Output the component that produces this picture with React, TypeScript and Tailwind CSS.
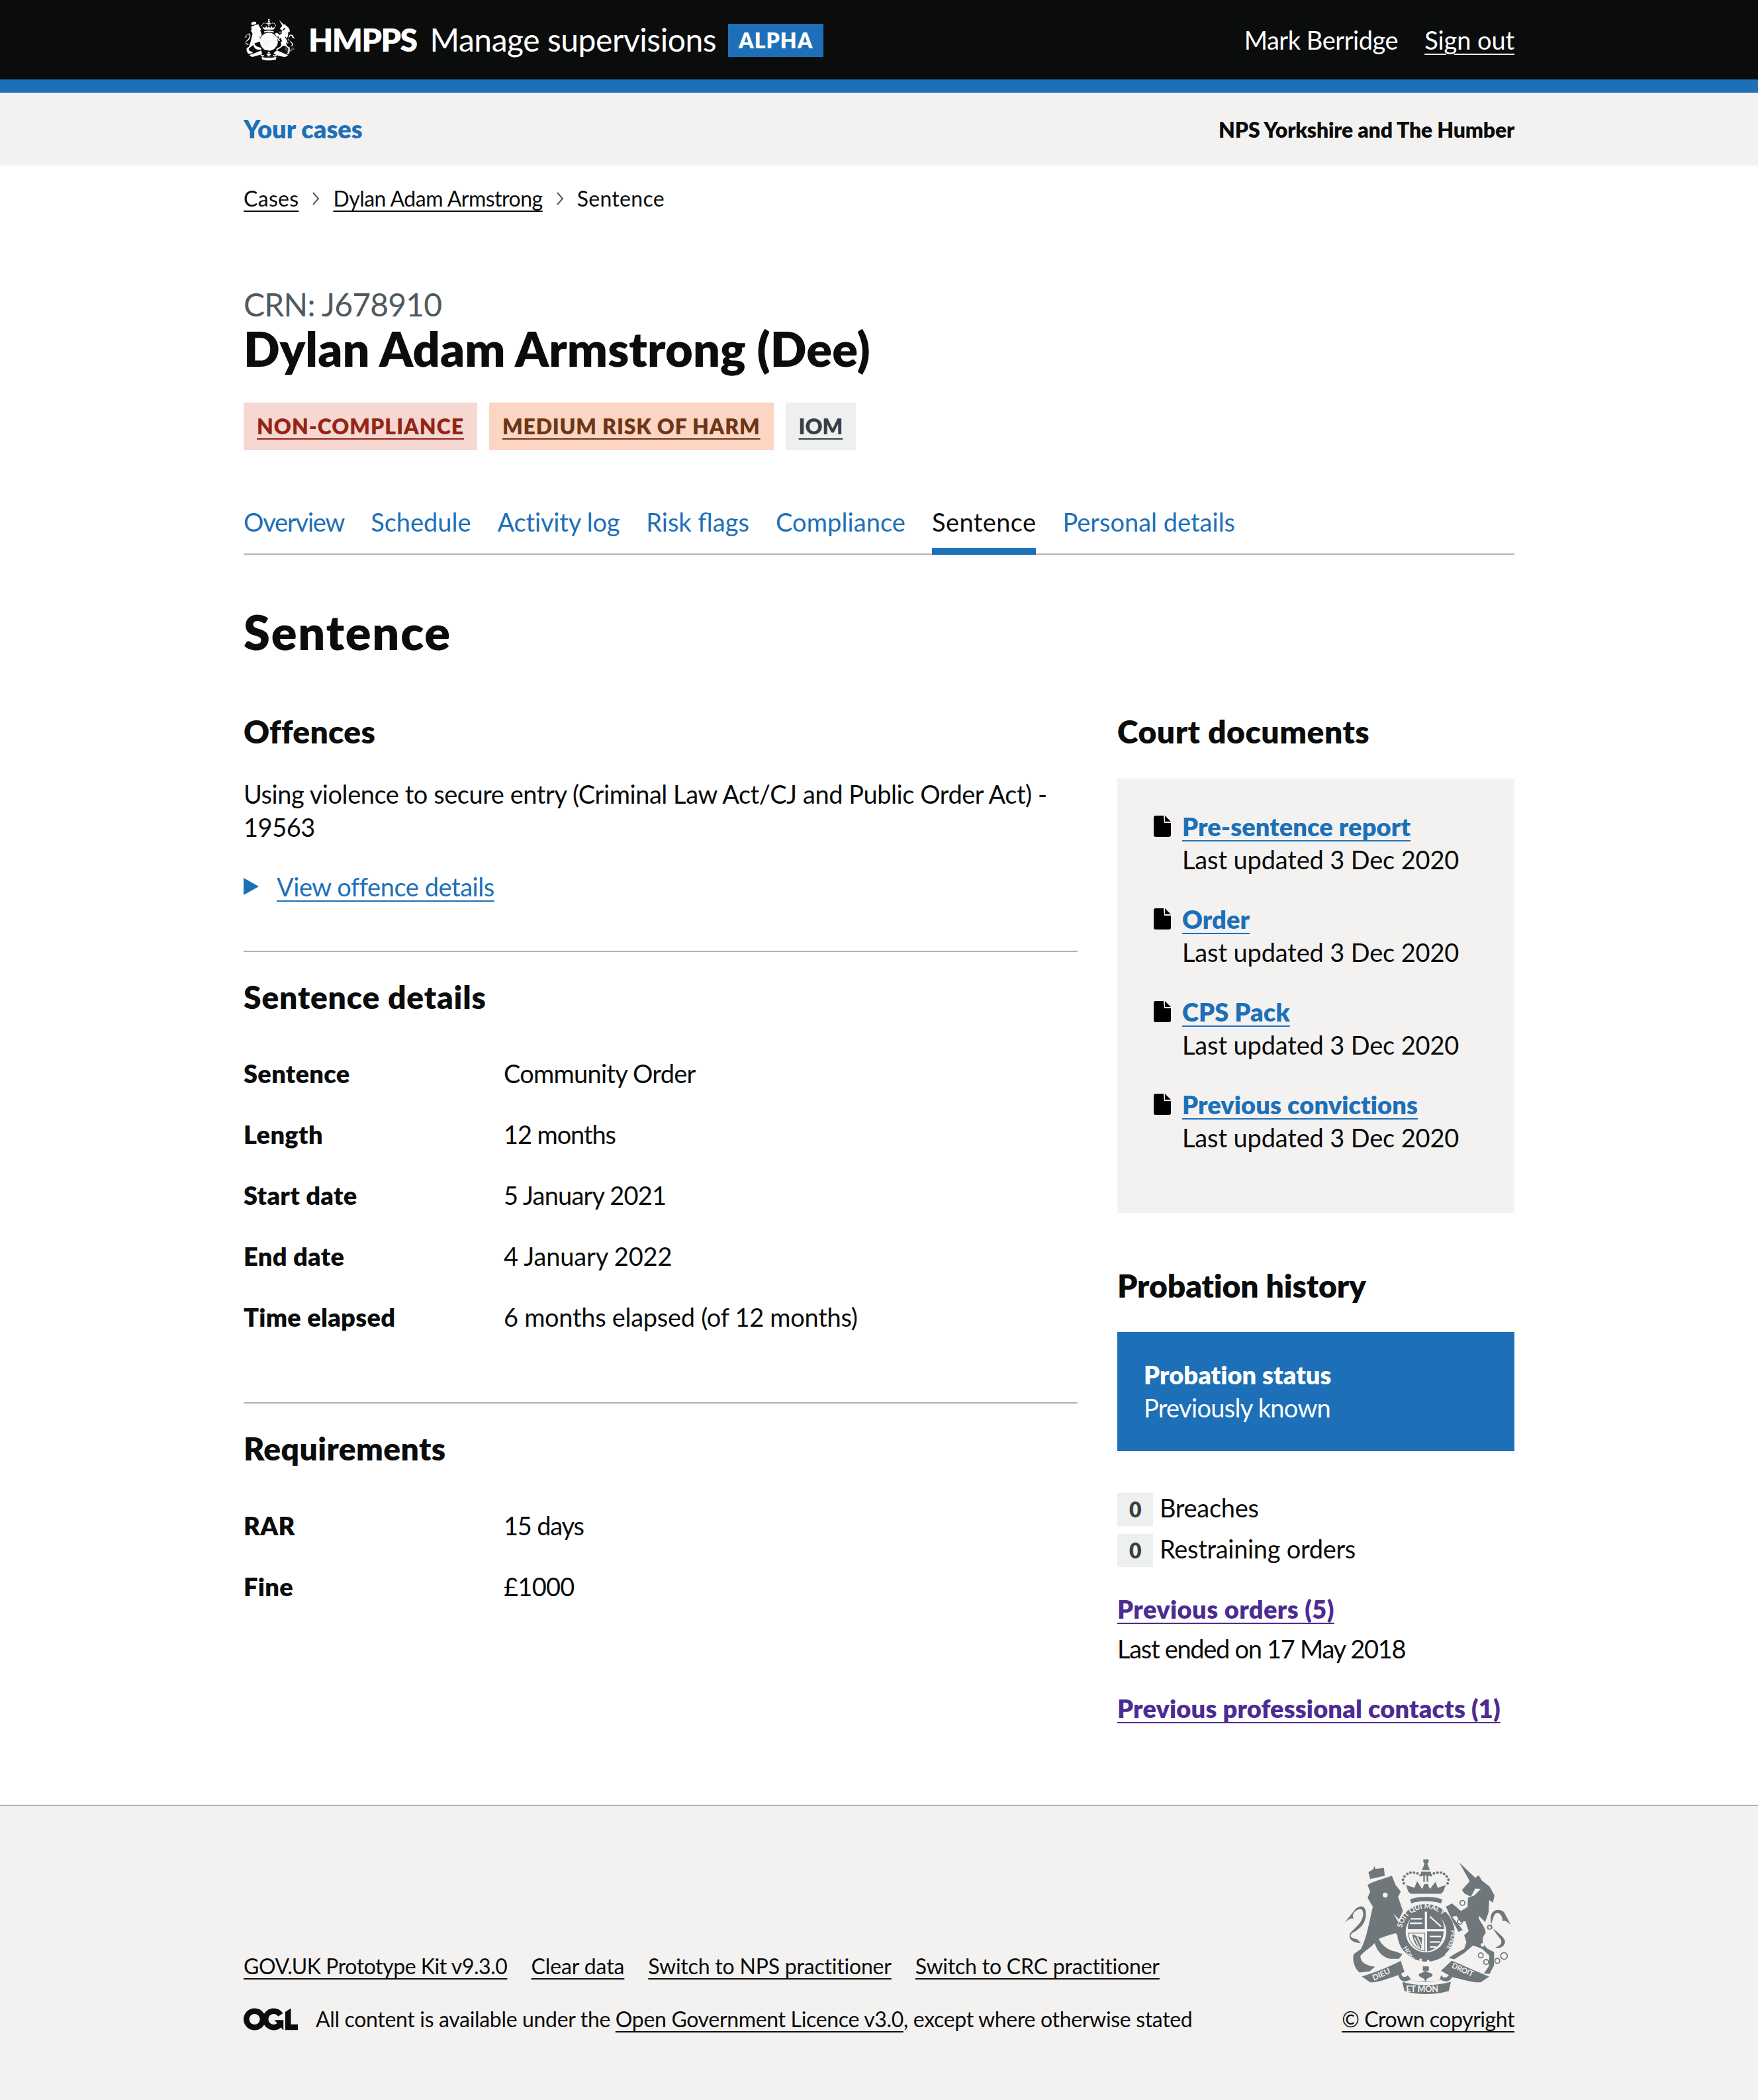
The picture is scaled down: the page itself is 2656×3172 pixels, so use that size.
import React from "react";

function Crest({ className }: { className?: string }) {
  return (
    <svg viewBox="150 110 760 620" className={className} fill="currentColor" aria-hidden="true">
      {/* lion */}
      <path d="M258 232 C280 215 330 205 368 190 L385 232 L408 262 L396 285 L418 350 L400 388 L375 362 L420 440 L430 468 L410 478 L385 450 L345 462 L308 475 C320 500 345 525 385 533 L416 545 L400 566 L360 566 C330 560 305 540 290 495 C275 515 250 525 226 552 C225 575 240 595 292 602 L268 622 L222 628 C200 610 188 575 195 545 L228 522 C250 480 262 420 275 360 L282 330 L258 290 L270 262 Z" />
      <path d="M212 478 C170 470 175 455 205 440 C235 420 255 395 250 350 C245 320 215 325 200 345 L155 402 C175 385 185 380 195 385 C185 365 200 350 212 345 C230 335 240 345 238 370 C230 410 195 430 180 450 C168 470 185 495 228 495 Z" />
      {/* lion crown */}
      <path d="M270 205 L262 175 L285 160 L288 145 L294 160 L332 155 L336 190 Z" />
      <circle cx="338" cy="278" r="11" fill="#f3f2f1" />
      {/* unicorn */}
      <path d="M672 130 L745 200 L760 188 L775 212 L810 240 L832 280 L825 312 L808 300 L805 355 L790 400 L762 372 C755 395 790 410 792 450 C775 470 770 490 800 520 L830 535 L830 595 L810 634 L784 632 L806 600 L808 550 L775 520 L735 505 L695 540 L650 568 L625 562 L650 545 L695 520 L705 490 L695 460 L715 440 L700 395 L678 400 L660 372 L640 375 L688 435 L670 445 L645 400 L612 330 L640 315 L680 350 L710 332 L712 290 L740 280 L770 250 L745 248 L725 285 L695 270 L685 255 L720 215 Z" />
      <path d="M812 420 C840 440 880 470 880 490 C875 510 860 520 835 515 C860 505 870 495 858 475 C835 445 810 420 815 375 C820 345 850 335 875 355 L905 412 C885 392 875 392 868 395 C870 375 855 352 838 360 C825 370 825 395 812 420 Z" />
      <g fill="none" stroke="currentColor" strokeWidth="5">
        <circle cx="687" cy="313" r="11" />
        <circle cx="676" cy="398" r="11" />
        <circle cx="770" cy="550" r="11" />
        <circle cx="794" cy="580" r="11" />
        <circle cx="845" cy="575" r="11" />
        <circle cx="875" cy="553" r="15" />
        <circle cx="810" cy="423" r="9" />
      </g>
      <circle cx="800" cy="466" r="9" fill="#f3f2f1" />
      <circle cx="778" cy="503" r="8" fill="#f3f2f1" />
      {/* central crown */}
      <path d="M510 116 H534 V128 L528 136 L540 165 H504 L516 136 L510 128 Z" />
      <path d="M442 262 L432 232 L470 245 L482 215 L505 250 L515 228 H530 L540 250 L565 218 L575 245 L612 232 L600 262 L590 272 L453 272 Z" />
      <g>
        {[[422, 225], [418, 208], [425, 193], [438, 182], [452, 176], [468, 176], [484, 180], [498, 188], [544, 188], [558, 180], [574, 176], [590, 176], [604, 182], [616, 193], [624, 208], [620, 225]].map(([x, y]) => (
          <circle key={x + "-" + y} cx={x} cy={y} r="6" />
        ))}
      </g>
      <rect x="510" y="188" width="7" height="30" />
      <rect x="525" y="188" width="7" height="30" />
      <path d="M500 172 H545 V190 H500 Z" />
      <path d="M450 298 C480 282 565 282 596 298 L590 316 C560 302 480 302 456 316 Z" />
      {/* garter */}
      <circle cx="522" cy="448" r="130" />
      <circle cx="522" cy="445" r="92" fill="#f3f2f1" />
      <g>
        <path d="M440 432 C440 385 470 355 517 350 V432 Z" />
        <path d="M527 350 C575 355 604 385 604 432 H527 Z" />
        <path d="M442 450 H517 V530 C480 528 445 495 442 450 Z" fill="#f3f2f1" stroke="currentColor" strokeWidth="3" />
        <path d="M527 442 H602 C600 495 565 528 527 532 Z" />
        <path d="M455 385 H505 M450 405 H505 M540 375 L590 420 M540 465 H590 M540 490 H585 M540 512 H570" stroke="#f3f2f1" strokeWidth="7" fill="none" />
        <path d="M460 455 L505 470 L500 525 C480 510 465 490 460 455 Z" />
        <path d="M470 470 L495 520 M482 465 L502 505" stroke="#f3f2f1" strokeWidth="5" fill="none" />
      </g>
      <defs>
        <path id="garterA" d="M412 430 A112 112 0 0 1 632 430" />
        <path id="garterC" d="M632 425 A112 112 0 0 1 590 540" />
      </defs>
      <g fill="#f3f2f1" fontFamily="Lato, sans-serif" fontWeight="700" fontSize="32">
        <text><textPath href="#garterA" startOffset="4">SOIT QUI MAL Y</textPath></text>
        <text fontSize="28"><textPath href="#garterC" startOffset="12">PENSE</textPath></text>
        <text x="418" y="516" fontSize="28" transform="rotate(60 418 516)">HONI</text>
      </g>
      <path d="M450 535 C480 590 560 590 610 548 L600 535 C560 565 500 570 470 528 Z" />
      <circle cx="498" cy="570" r="6" fill="#f3f2f1" />
      <circle cx="532" cy="576" r="6" fill="#f3f2f1" />
      {/* scroll */}
      <path d="M232 646 C300 625 360 600 408 575 L425 625 L395 640 C340 660 295 675 270 672 Z" />
      <path d="M808 646 C740 620 680 590 638 575 L590 620 L640 648 C690 660 740 675 770 672 Z" />
      <path d="M395 628 C400 660 415 680 450 660 C495 672 550 672 590 660 C620 680 640 660 648 630 L635 622 C625 650 605 660 590 640 L585 660 C540 675 500 675 455 660 L440 640 C425 655 410 650 408 620 Z" />
      <path d="M415 670 C480 690 560 690 635 670 L625 712 C560 730 480 730 425 712 Z" />
      <g fill="#f3f2f1" fontFamily="Lato, sans-serif" fontWeight="700">
        <text x="287" y="665" fontSize="36" transform="rotate(-25 287 665)">DIEU</text>
        <text x="432" y="716" fontSize="38">ET MON</text>
        <text x="636" y="605" fontSize="34" transform="rotate(24 636 605)">DROIT</text>
      </g>
      {/* fleur */}
      <path d="M522 600 L535 600 V620 H508 V600 Z" />
      <path d="M520 618 C505 635 490 625 490 640 C495 655 515 645 520 672 C525 645 545 655 552 640 C552 625 535 635 520 618 Z" />
    </svg>
  );
}

function DocIcon() {
  return (
    <svg viewBox="0 0 26 32" className="w-[26px] h-[32px] shrink-0 mt-[9px]" aria-hidden="true">
      <path d="M3 0 H15 L16 11 H26 V29 C26 31 25 32 23 32 H3 C1 32 0 31 0 29 V3 C0 1 1 0 3 0 Z M17 0 L26 9 H17 Z" fill="#000" />
    </svg>
  );
}

const docs = ["Pre-sentence report", "Order", "CPS Pack", "Previous convictions"];
const tabs: [string, string][] = [
  ["Overview", "tracking-[-1.2px]"],
  ["Schedule", ""],
  ["Activity log", "tracking-[-0.2px]"],
  ["Risk flags", ""],
  ["Compliance", "tracking-[0.1px]"],
  ["Personal details", ""],
];
const rows: [string, string, string][] = [
  ["Sentence", "Community Order", "tracking-[-0.75px]"],
  ["Length", "12 months", "tracking-[-1.1px]"],
  ["Start date", "5 January 2021", "tracking-[-0.8px]"],
  ["End date", "4 January 2022", "tracking-[-0.15px]"],
  ["Time elapsed", "6 months elapsed (of 12 months)", "tracking-[-0.3px]"],
];
const reqs: [string, string, string][] = [
  ["RAR", "15 days", "tracking-[-1.2px]"],
  ["Fine", "£1000", "tracking-[-0.7px]"],
];

const linkLine = "underline decoration-2 underline-offset-[6px]";
const h3Base = "text-[48px] leading-[54px] font-extrabold ";
const h3Tall = "text-[48px] leading-[58px] font-extrabold ";

function Row({ k, v, t }: { k: string; v: string; t: string }) {
  return (
    <div className="flex h-[92px] items-start pt-[18px] text-[38px] leading-[50px]">
      <div className="w-[393px] font-extrabold tracking-[0.3px]">{k}</div>
      <div className={t}>{v}</div>
    </div>
  );
}

export default function App() {
  return (
    <div className="[font-family:Lato,sans-serif] tracking-[-0.45px] text-[#0b0c0c] bg-white w-full h-[3172px] flex flex-col text-[38px] leading-[50px]">
      <header className="h-[140px] shrink-0 bg-[#0b0c0c] border-b-[20px] border-[#1d70b8] text-white">
        <div className="w-[1920px] mx-auto h-full flex items-center justify-between">
          <div className="flex items-center">
            <Crest className="w-[78px] h-[68px] text-white mr-[20px]" />
            <span className="text-[48px] font-extrabold tracking-[-1.5px] mr-[20px]">HMPPS</span>
            <span className="text-[48px] mr-[18px]">Manage supervisions</span>
            <span className="h-[50px] w-[144px] bg-[#1d70b8] flex items-center justify-center text-[32px] font-extrabold tracking-[1px] mt-[2px]">ALPHA</span>
          </div>
          <div className="flex items-center gap-[40px]">
            <span>Mark Berridge</span>
            <a className={"tracking-[-0.1px] " + linkLine}>Sign out</a>
          </div>
        </div>
      </header>

      <nav className="h-[110px] shrink-0 bg-[#f3f2f1]">
        <div className="w-[1920px] mx-auto h-full flex items-center justify-between">
          <a className="font-extrabold tracking-[0px] text-[#1d70b8] -mt-[2px]">Your cases</a>
          <span className="font-extrabold tracking-[-0.2px] text-[32px] mt-[2px]">NPS Yorkshire and The Humber</span>
        </div>
      </nav>

      <main className="w-[1920px] mx-auto flex-1">
        <div className="flex items-center h-[40px] mt-[30px] text-[32px] leading-[40px]">
          <a className={"tracking-[0.3px] " + linkLine}>Cases</a>
          <svg viewBox="0 0 12 20" className="w-[12px] h-[20px] mx-[20px] text-[#505a5f]" fill="none" stroke="currentColor" strokeWidth="2"><path d="M2 1 L10 10 L2 19" /></svg>
          <a className={"tracking-[-0.5px] " + linkLine}>Dylan Adam Armstrong</a>
          <svg viewBox="0 0 12 20" className="w-[12px] h-[20px] mx-[20px] text-[#505a5f]" fill="none" stroke="currentColor" strokeWidth="2"><path d="M2 1 L10 10 L2 19" /></svg>
          <span className="tracking-[0.3px]">Sentence</span>
        </div>

        <div className="mt-[110px] text-[48px] leading-[60px] tracking-[-0.8px] text-[#505a5f]">CRN: J678910</div>
        <h1 className="-mt-[2px] text-[72px] leading-[76px] font-extrabold tracking-[0.1px]">Dylan Adam Armstrong (Dee)</h1>

        <div className="flex gap-[18px] mt-[44px] text-[32px] font-extrabold tracking-[1px] uppercase">
          <span className="h-[72px] px-[20px] flex items-center bg-[#f6d7d2] text-[#942514]"><a className={linkLine}>Non-compliance</a></span>
          <span className="h-[72px] px-[20px] flex items-center bg-[#fcd6c3] text-[#6e3619]"><a className={"tracking-[0.8px] " + linkLine}>Medium risk of harm</a></span>
          <span className="h-[72px] px-[20px] flex items-center bg-[#eeefef] text-[#383f43]"><a className={"tracking-[0px] " + linkLine}>IOM</a></span>
        </div>

        <div className="flex gap-[40px] mt-[85px] h-[73px] border-b-2 border-[#b1b4b6] text-[#1d70b8] leading-[46px] tracking-[0px]">
          {tabs.slice(0, 5).map(([t, c]) => (
            <a key={t} className={c}>{t}</a>
          ))}
          <span className="h-[73px] border-b-[10px] border-[#1d70b8] text-[#0b0c0c] tracking-[0.4px]">Sentence</span>
          <a>Personal details</a>
        </div>

        <h2 className="text-[72px] leading-[72px] font-extrabold tracking-[1.8px] mt-[80px]">Sentence</h2>

        <div className="flex mt-[86px] gap-[60px]">
          <div className="w-[1260px]">
            <h3 className={h3Tall + "tracking-[0.3px]"}>Offences</h3>
            <p className="mt-[40px] w-[1240px]">Using violence to secure entry (Criminal Law Act/CJ and Public Order Act) - 19563</p>
            <div className="flex items-center mt-[40px]">
              <span className="w-0 h-0 border-y-[13px] border-y-transparent border-l-[23px] border-l-[#1d70b8] mr-[27px]"></span>
              <a className={"text-[#1d70b8] " + linkLine}>View offence details</a>
            </div>
            <hr className="mt-[72px] border-t-2 border-[#b1b4b6]" />
            <h3 className={h3Base + "tracking-[0.8px] mt-[41px]"}>Sentence details</h3>
            <div className="mt-[45px]">
              {rows.map(([k, v, t]) => <Row key={k} k={k} v={v} t={t} />)}
            </div>
            <hr className="mt-[80px] border-t-2 border-[#b1b4b6]" />
            <h3 className={h3Base + "tracking-[0.4px] mt-[41px]"}>Requirements</h3>
            <div className="mt-[46px]">
              {reqs.map(([k, v, t]) => <Row key={k} k={k} v={v} t={t} />)}
            </div>
          </div>

          <div className="w-[600px]">
            <h3 className={h3Tall + "tracking-[0.5px]"}>Court documents</h3>
            <div className="mt-[42px] h-[656px] bg-[#f3f2f1] pt-[47px] pl-[55px] flex flex-col gap-[40px]">
              {docs.map((d) => (
                <div key={d} className="flex gap-[17px]">
                  <DocIcon />
                  <div>
                    <a className={"block w-fit font-extrabold tracking-[0.1px] text-[#1d70b8] " + linkLine}>{d}</a>
                    <div className="tracking-[-0.15px]">Last updated 3 Dec 2020</div>
                  </div>
                </div>
              ))}
            </div>
            <h3 className={h3Base + "tracking-[-0.1px] mt-[83px]"}>Probation history</h3>
            <div className="mt-[43px] h-[180px] bg-[#1d70b8] text-white px-[40px] py-[39px]">
              <div className="font-extrabold tracking-[0.05px]">Probation status</div>
              <div className="tracking-[-0.7px]">Previously known</div>
            </div>
            <div className="mt-[63px] flex flex-col gap-[12px]">
              {["Breaches", "Restraining orders"].map((t) => (
                <div key={t} className="flex items-center gap-[10px]">
                  <span className="w-[54px] h-[50px] bg-[#eeefef] text-[#383f43] font-extrabold text-[32px] flex items-center justify-center">0</span>
                  <span className="-mt-[6px] tracking-[-0.3px]">{t}</span>
                </div>
              ))}
            </div>
            <a className={"block w-fit mt-[38px] font-extrabold tracking-[0.4px] text-[#4c2c92] " + linkLine}>Previous orders (5)</a>
            <p className="mt-[10px] tracking-[-1.3px]">Last ended on 17 May 2018</p>
            <a className={"block w-fit mt-[40px] font-extrabold tracking-[0.15px] text-[#4c2c92] " + linkLine}>Previous professional contacts (1)</a>
          </div>
        </div>
      </main>

      <footer className="h-[446px] shrink-0 bg-[#f3f2f1] border-t-2 border-[#b1b4b6] text-[32px] leading-[40px]">
        <div className="w-[1920px] mx-auto h-full flex justify-between items-start">
          <div className="mt-[222px]">
            <div className="flex gap-[36px]">
              <a className={linkLine}>GOV.UK Prototype Kit v9.3.0</a>
              <a className={"tracking-[-0.1px] " + linkLine}>Clear data</a>
              <a className={"tracking-[-0.2px] " + linkLine}>Switch to NPS practitioner</a>
              <a className={"tracking-[-0.2px] " + linkLine}>Switch to CRC practitioner</a>
            </div>
            <div className="flex items-center mt-[40px]">
              <svg viewBox="0 0 483.2 195.7" className="w-[82px] h-[34px] mr-[27px] text-[#0b0c0c]" aria-hidden="true">
                <path fill="currentColor" d="M421.5 142.8V.1l-50.7 32.3v161.1h112.4v-50.7zm-122.3-9.6A47.12 47.12 0 0 1 221 97.8c0-26 21.1-47.1 47.1-47.1 16.7 0 31.4 8.7 39.7 21.8l42.7-27.2A97.63 97.63 0 0 0 268.1 0c-36.5 0-68.3 20.1-85.1 49.7A98 98 0 0 0 97.8 0C43.9 0 0 43.9 0 97.8s43.9 97.8 97.8 97.8c36.5 0 68.3-20.1 85.1-49.7a97.76 97.76 0 0 0 149.6 25.4l19.4 22.2h3v-87.8h-80l24.3 27.5zM97.8 145c-26 0-47.1-21.1-47.1-47.1s21.1-47.1 47.1-47.1 47.2 21 47.2 47S123.8 145 97.8 145" />
              </svg>
              <span className="tracking-[-0.33px]">All content is available under the <a className={linkLine}>Open Government Licence v3.0</a>, except where otherwise stated</span>
            </div>
          </div>
          <div className="mt-[78px] flex flex-col items-end">
            <Crest className="w-[254px] h-[208px] text-[#6f777b] mr-[4px]" />
            <a className={"mt-[16px] " + linkLine}>© Crown copyright</a>
          </div>
        </div>
      </footer>
    </div>
  );
}
